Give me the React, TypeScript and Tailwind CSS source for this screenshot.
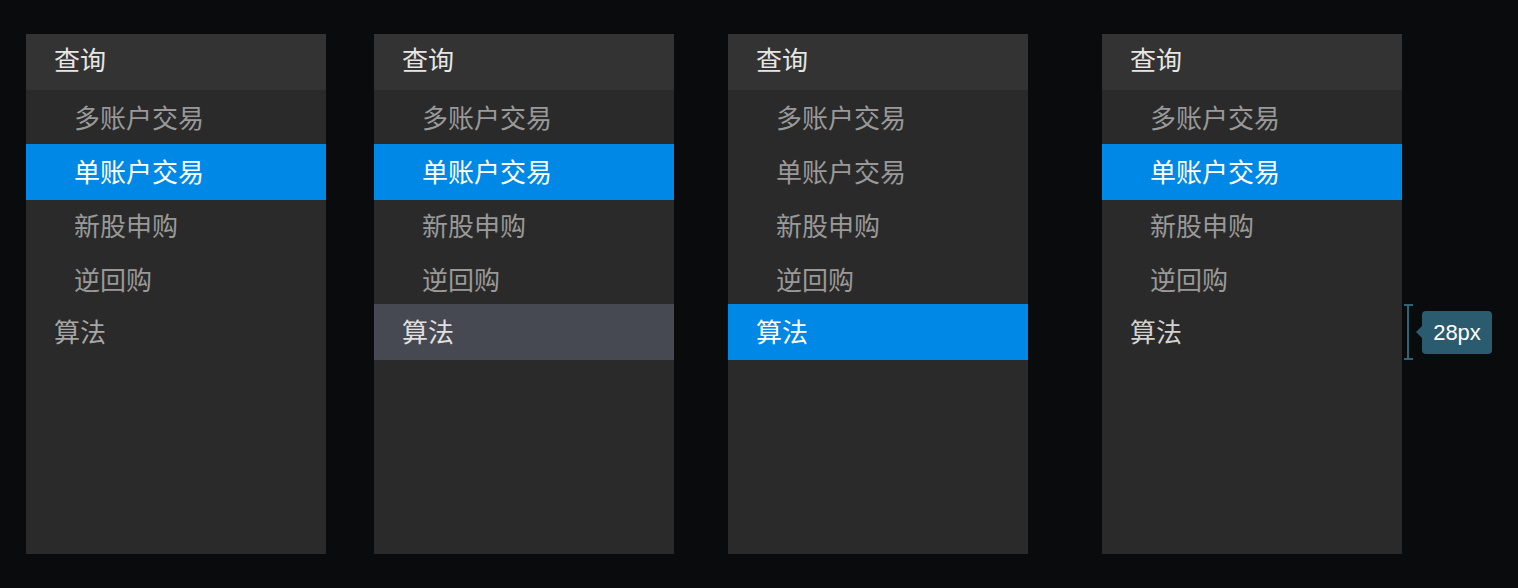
import React from 'react';

type Row = { label: string; sub?: boolean; h: string };

const rows: Row[] = [
  { label: '多账户交易', sub: true, h: 'h-[54px] pb-[2px]' },
  { label: '单账户交易', sub: true, h: 'h-[56px] pb-[3px]' },
  { label: '新股申购', sub: true, h: 'h-[52px] pb-[3px]' },
  { label: '逆回购', sub: true, h: 'h-[52px] pb-[0px]' },
  { label: '算法', h: 'h-[56px] pb-[3px]' },
];

type Variant = 'default' | 'hover' | 'active' | 'spec';

const Panel: React.FC<{ variant: Variant; active: string; className?: string }> = ({ variant, active, className }) => {
  return (
    <div className={`relative w-[300px] h-[520px] bg-[#2a2a2a] shrink-0 ${className ?? ''}`}>
      <div className="h-[56px] bg-[#333333] flex items-center pl-[28px] pb-[7px] text-[26px] text-[#e6e6e6]">查询</div>
      {rows.map((r) => {
        const isActive = r.label === active;
        const isAlgo = r.label === '算法';
        let bg = '';
        let color = 'text-[#999999]';
        if (isActive) {
          bg = 'bg-[#0088e6]';
          color = 'text-white';
        } else if (isAlgo && variant === 'hover') {
          bg = 'bg-[#464951]';
          color = 'text-[#e0e0e0]';
        } else if (isAlgo && variant === 'spec') {
          color = 'text-[#d2d2d2]';
        } else if (isAlgo) {
          color = 'text-[#a6a6a6]';
        }
        return (
          <div
            key={r.label}
            className={`${r.h} ${bg} ${color} flex items-center text-[26px] ${r.sub ? 'pl-[48px]' : 'pl-[28px]'}`}
          >
            {r.label}
          </div>
        );
      })}
      {variant === 'spec' && (
        <div className="absolute left-[302px] top-[270px] h-[56px] flex items-center">
          <div className="relative w-[9px] h-[56px]">
            <div className="absolute left-[3px] top-0 w-[2px] h-full bg-[#2f6477]" />
            <div className="absolute left-0 top-0 w-[9px] h-[2px] bg-[#2f6477]" />
            <div className="absolute left-0 bottom-0 w-[9px] h-[2px] bg-[#2f6477]" />
          </div>
          <div className="relative ml-[9px] h-[43px] w-[70px] rounded-[4px] bg-[#2b5b6e] flex items-center justify-center text-[22px] text-white font-['Liberation_Sans',sans-serif]">
            <div className="absolute left-[-6px] top-1/2 -translate-y-1/2 w-0 h-0 border-y-[6px] border-y-transparent border-r-[6px] border-r-[#2b5b6e]" />
            28px
          </div>
        </div>
      )}
    </div>
  );
};

export default function App() {
  return (
    <div className="w-[1518px] h-[588px] bg-[#0a0b0d] font-['Noto_Sans_CJK_SC','Noto_Sans',sans-serif] overflow-hidden">
      <div className="flex pt-[34px] pl-[26px]">
        <Panel variant="default" active="单账户交易" />
        <Panel variant="hover" active="单账户交易" className="ml-[48px]" />
        <Panel variant="active" active="算法" className="ml-[54px]" />
        <Panel variant="spec" active="单账户交易" className="ml-[74px]" />
      </div>
    </div>
  );
}
